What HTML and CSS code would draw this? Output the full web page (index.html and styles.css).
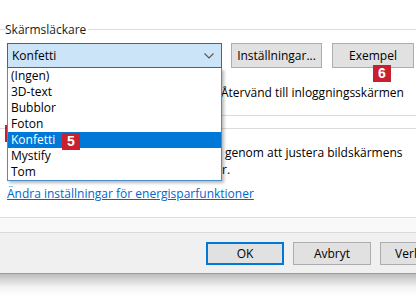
FILE: index.html
```html
<!DOCTYPE html>
<html lang="sv">
<head>
<meta charset="utf-8">
<link rel="stylesheet" href="styles.css">
</head>
<body>
<div class="dialog">
  <div class="content">
    <div class="group-title">
      <span class="gline lead"></span>
      <span class="gtext">Skärmsläckare</span>
      <span class="gline fill"></span>
    </div>
    <div class="controls">
      <div class="combo">
        <span class="combo-text">Konfetti</span>
        <svg class="chev" width="10" height="6" viewBox="0 0 10 6"><path d="M0.5 0.5 L5 5 L9.5 0.5" fill="none" stroke="#555" stroke-width="1.1"/></svg>
      </div>
      <button class="btn settings">Inställningar...</button>
      <button class="btn example">Exempel</button>
    </div>
    <div class="check-row">
      <span class="checkbox"></span>
      <span class="check-label">Återvänd till inloggningsskärmen</span>
    </div>
    <div class="group-end"></div>
    <div class="group-title second">
      <span class="gline fill"></span>
    </div>
    <div class="desc">
      <span class="desc-line first">genom att justera bildskärmens</span>
      <span class="desc-line">r.</span>
    </div>
    <a class="link" href="#">Ändra inställningar för energisparfunktioner</a>
  </div>
  <div class="footer-sep"></div>
  <div class="footer">
    <button class="btn fbtn default">OK</button>
    <button class="btn fbtn">Avbryt</button>
    <button class="btn fbtn">Verkställ</button>
  </div>
  <div class="shadow"></div>

  <span class="badge badge-hidden"></span>
  <ul class="dropdown">
    <li>(Ingen)</li>
    <li>3D-text</li>
    <li>Bubblor</li>
    <li>Foton</li>
    <li class="selected">Konfetti</li>
    <li>Mystify</li>
    <li>Tom</li>
  </ul>
  <span class="badge badge-5">5</span>
  <span class="badge badge-6">6</span>
</div>
</body>
</html>
```

FILE: styles.css
```css
* { box-sizing: border-box; }
html, body { margin: 0; padding: 0; background: #fff; }
body {
  width: 416px;
  height: 306px;
  overflow: hidden;
  font-family: "Open Sans", "Noto Sans", sans-serif;
  font-size: 12px;
  color: #000;
}
.dialog {
  position: relative;
  width: 416px;
  height: 306px;
  overflow: hidden;
}
.content {
  height: 217px;
  padding-top: 21px;
}
.group-title {
  display: flex;
  align-items: center;
  height: 17px;
}
.gline { height: 1px; background: #dcdcdc; }
.gline.lead { width: 5px; }
.gline.fill { flex: 1; }
.gtext { padding: 0 2px 0 0; line-height: 17px; color: #1a1a1a; }
.controls {
  display: flex;
  margin-top: 5px;
  padding-left: 7px;
  gap: 9px;
  height: 25px;
}
.combo {
  width: 215px;
  height: 25px;
  border: 1px solid #0078d7;
  background: #cce4f7;
  display: flex;
  align-items: center;
  justify-content: space-between;
  padding: 0 7px 0 4px;
}
.chev { display: block; }
.btn {
  font-family: inherit;
  font-size: 12px;
  color: #000;
  background: #e1e1e1;
  border: 1px solid #adadad;
  padding: 0;
  height: 25px;
}
.settings { width: 91px; }
.example { width: 82px; margin-left: 1px; }
.check-row {
  display: flex;
  align-items: center;
  height: 16px;
  margin-top: 16px;
  padding-left: 12px;
}
.checkbox {
  width: 13px;
  height: 13px;
  border: 1px solid #333;
  background: #fff;
}
.check-label { margin-left: 196px; }
.group-end {
  margin: 15px 0 0 8px;
  height: 1px;
  background: #dcdcdc;
}
.group-title.second { margin-top: 4px; }
.desc {
  display: flex;
  flex-direction: column;
  padding-left: 222px;
  margin-top: 7px;
  line-height: 17px;
}
.desc-line.first { padding-left: 3px; }
.link {
  display: block;
  margin: 8px 0 0 7px;
  color: #0066cc;
  text-decoration: underline;
  line-height: 16px;
  width: max-content;
}
.footer-sep {
  height: 16px;
  border-top: 1px solid #dfdfdf;
  border-bottom: 1px solid #dadada;
  background: #f9f9f9;
}
.footer {
  height: 41px;
  background: #f0f0f0;
  display: flex;
  align-items: flex-start;
  padding: 9px 0 0 206px;
  gap: 9px;
  border-bottom: 1px solid #9b9b9b;
}
.fbtn { width: 78px; height: 23px; flex: none; }
.fbtn.default { border: 2px solid #0078d7; }
.shadow {
  height: 22px;
  background: linear-gradient(#bdbdbd, #f4f4f4 60%, #fff);
}
.dropdown {
  position: absolute;
  left: 7px;
  top: 68px;
  width: 215px;
  margin: 0;
  padding: 0;
  list-style: none;
  background: #fff;
  border: 1px solid #4c8cc8;
  border-top: none;
  box-shadow: 2px 2px 3px rgba(0,0,0,0.28);
}
.dropdown li {
  height: 16px;
  line-height: 16px;
  padding-left: 3px;
  color: #000;
}
.dropdown li.selected { background: #0078d7; color: #fff; }
.badge {
  position: absolute;
  background: #c8202f;
  color: #fff;
  font-family: "Liberation Sans", Arial, sans-serif;
  font-weight: bold;
  font-size: 14px;
  line-height: 17px;
  width: 18px;
  height: 17px;
  text-align: center;
}
.badge-5 { left: 62px; top: 133px; }
.badge-6 { left: 373px; top: 65px; }
.badge-hidden { left: 5px; top: 125px; }
```
